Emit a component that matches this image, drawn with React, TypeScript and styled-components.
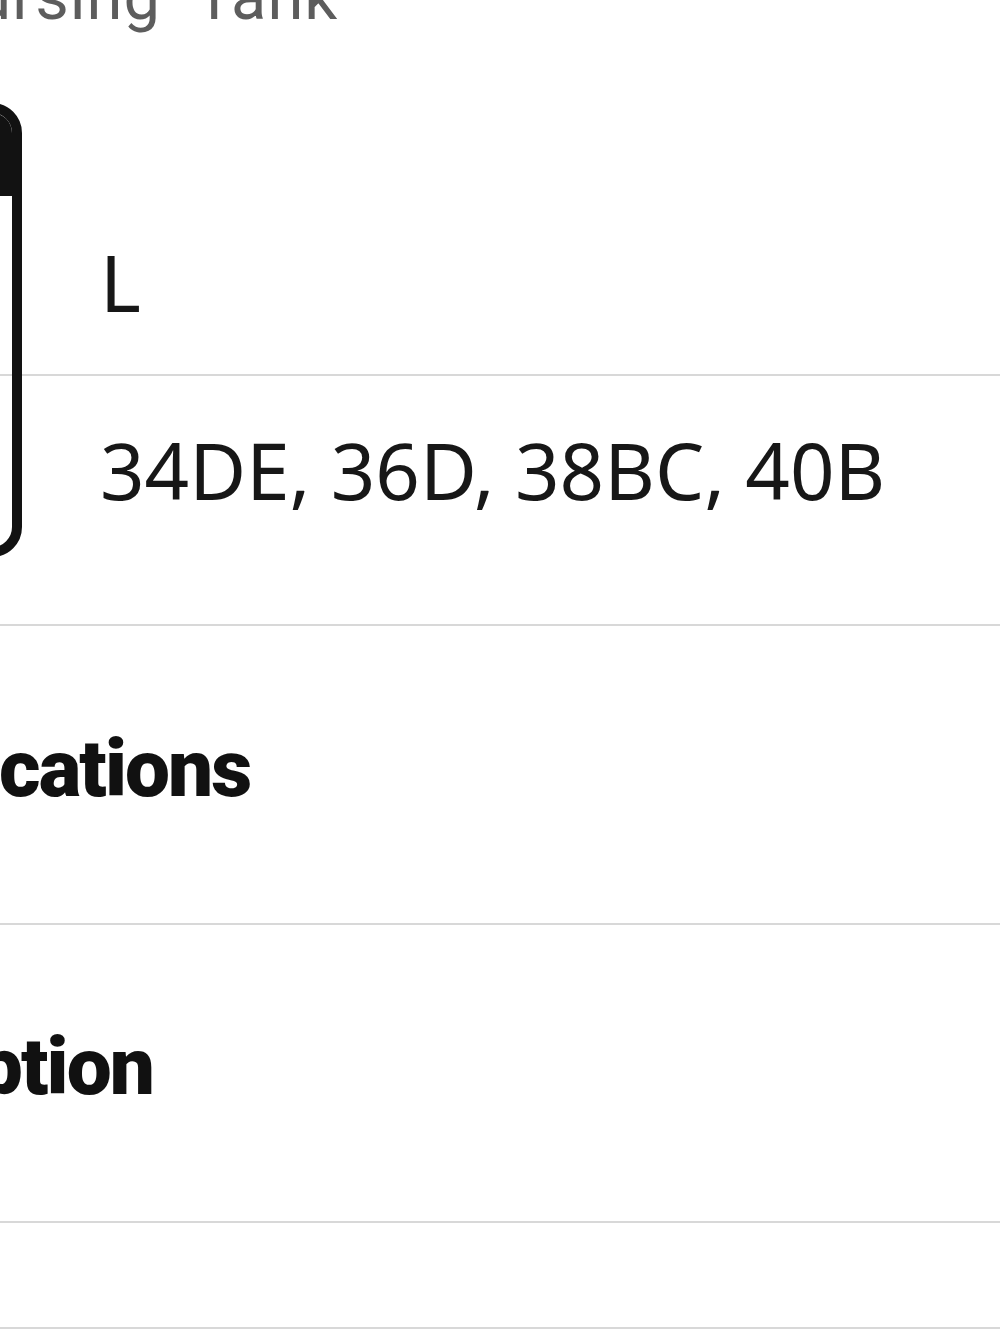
import styled, { createGlobalStyle } from 'styled-components';

const GlobalStyle = createGlobalStyle`
  html, body {
    margin: 0;
    padding: 0;
    background: #fff;
  }
  body {
    font-family: "Noto Sans", Roboto, Arial, sans-serif;
    color: #151515;
  }
`;

const Page = styled.div`
  width: 1000px;
  height: 1330px;
  overflow: hidden;
  background: #fff;
`;

// the product column is wider than the viewport and scrolled to the right
const Column = styled.div`
  margin-left: -260px;
  width: 1260px;
  display: flex;
  flex-direction: column;
`;

const Title = styled.h1`
  margin: -36px 0 0;
  padding-left: 188px;
  font-family: Roboto, "Noto Sans", sans-serif;
  font-size: 65px;
  line-height: 66px;
  font-weight: 400;
  letter-spacing: 1px;
  word-spacing: 18px;
  color: #5d5d5d;
  white-space: nowrap;
`;

const SizeTable = styled.div`
  margin-top: 73px;
  display: grid;
  grid-template-columns: 282px 1fr;
  grid-template-rows: 93px 180px 181px;
`;

const Cell = styled.div<{ $ruled?: boolean; $col: number; $row: number; $nudge?: number }>`
  grid-column: ${(p) => p.$col};
  grid-row: ${(p) => p.$row};
  display: flex;
  align-items: center;
  padding-left: ${(p) => (p.$col === 2 ? '78px' : '40px')};
  padding-top: ${(p) => Math.max(0, p.$nudge ?? 0)}px;
  padding-bottom: ${(p) => Math.max(0, -(p.$nudge ?? 0))}px;
  font-size: 78px;
  line-height: 78px;
  color: #171717;
  white-space: nowrap;
  border-bottom: ${(p) => (p.$ruled ? '2px solid #d8d8d8' : 'none')};
`;

// selected column outline with its filled header
const Highlight = styled.div`
  grid-column: 1;
  grid-row: 1 / -1;
  border: 10px solid #121212;
  border-radius: 30px;
  overflow: hidden;
  pointer-events: none;
`;

const HighlightHead = styled.div`
  height: 83px;
  background: #121212;
`;

const Sections = styled.div`
  margin-top: 67px;
  border-top: 2px solid #d8d8d8;
`;

const Section = styled.div<{ $height: number }>`
  height: ${(p) => p.$height}px;
  display: flex;
  align-items: center;
  padding: 0 0 12px 19px;
  box-sizing: border-box;
  border-bottom: 2px solid #d8d8d8;
`;

const SectionTitle = styled.h2`
  margin: 0;
  font-family: Roboto, "Noto Sans", sans-serif;
  font-size: 80px;
  line-height: 80px;
  font-weight: 900;
  letter-spacing: -1.9px;
  color: #111;
  white-space: nowrap;
`;

const sizes = [
  { label: 'Size', value: 'L', nudge: -6 },
  { label: 'Bra', value: '34DE, 36D, 38BC, 40B', nudge: 7 },
];

export default function App() {
  return (
    <>
      <GlobalStyle />
      <Page>
        <Column>
          <Title>Nursing Tank</Title>
          <SizeTable>
            <Cell $col={1} $row={1} />
            <Cell $col={2} $row={1} />
            {sizes.map((s, i) => [
              <Cell key={s.label} $col={1} $row={i + 2} $ruled={i === 0} />,
              <Cell key={s.value} $col={2} $row={i + 2} $ruled={i === 0} $nudge={s.nudge}>
                {s.value}
              </Cell>,
            ])}
            <Highlight>
              <HighlightHead />
            </Highlight>
          </SizeTable>
          <Sections>
            <Section $height={299}>
              <SectionTitle>Specifications</SectionTitle>
            </Section>
            <Section $height={298}>
              <SectionTitle>Description</SectionTitle>
            </Section>
            <Section $height={106} />
          </Sections>
        </Column>
      </Page>
    </>
  );
}
